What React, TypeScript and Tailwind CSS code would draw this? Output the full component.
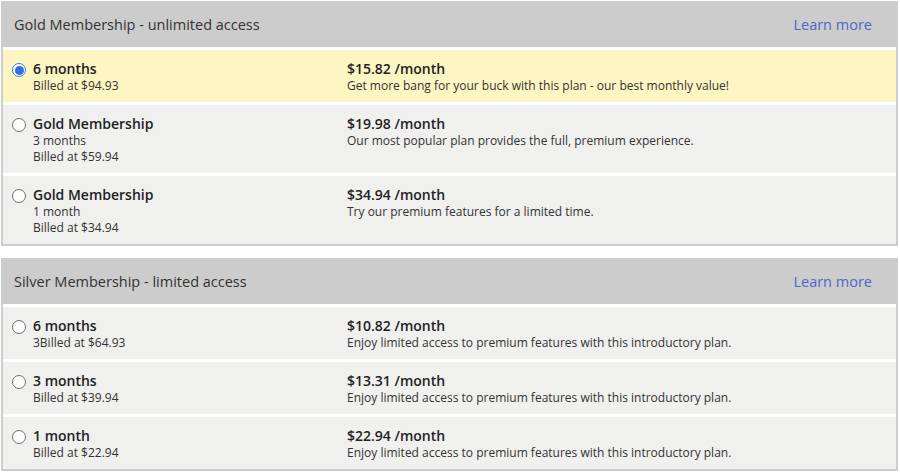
import React from "react";

type Plan = {
  title: string;
  lines: string[];
  price: string;
  desc: string;
  selected?: boolean;
};

const gold: Plan[] = [
  { title: "6 months", lines: ["Billed at $94.93"], price: "$15.82 /month", desc: "Get more bang for your buck with this plan - our best monthly value!", selected: true },
  { title: "Gold Membership", lines: ["3 months", "Billed at $59.94"], price: "$19.98 /month", desc: "Our most popular plan provides the full, premium experience." },
  { title: "Gold Membership", lines: ["1 month", "Billed at $34.94"], price: "$34.94 /month", desc: "Try our premium features for a limited time." },
];

const silver: Plan[] = [
  { title: "6 months", lines: ["3Billed at $64.93"], price: "$10.82 /month", desc: "Enjoy limited access to premium features with this introductory plan." },
  { title: "3 months", lines: ["Billed at $39.94"], price: "$13.31 /month", desc: "Enjoy limited access to premium features with this introductory plan." },
  { title: "1 month", lines: ["Billed at $22.94"], price: "$22.94 /month", desc: "Enjoy limited access to premium features with this introductory plan." },
];

function Radio({ checked }: { checked?: boolean }) {
  return checked ? (
    <span className="mt-[3px] flex h-[14px] w-[14px] shrink-0 items-center justify-center rounded-full border border-[#3a78d8] bg-white">
      <span className="h-[9px] w-[9px] rounded-full bg-[#2f6fe0]" />
    </span>
  ) : (
    <span className="mt-[3px] h-[14px] w-[14px] shrink-0 rounded-full border border-[#6e6e6e] bg-white" />
  );
}

function Row({ p }: { p: Plan }) {
  return (
    <div className={`flex pt-[10px] pb-[8px] pl-[9px] ${p.selected ? "bg-[#fdf5c2]" : "bg-[#f0f0ef]"}`}>
      <div className="flex w-[335px] gap-[7px]">
        <Radio checked={p.selected} />
        <div className="flex flex-col">
          <div className="text-[14px] leading-[18px] font-semibold text-[#222]">{p.title}</div>
          {p.lines.map((l, i) => (
            <div key={i} className="text-[12px] leading-[16px] text-[#333]">{l}</div>
          ))}
        </div>
      </div>
      <div className="flex flex-col">
        <div className="text-[14px] leading-[18px] font-semibold text-[#222]">{p.price}</div>
        <div className="text-[12px] leading-[16px] text-[#333]">{p.desc}</div>
      </div>
    </div>
  );
}

function Panel({ title, plans }: { title: string; plans: Plan[] }) {
  return (
    <div className="flex flex-col gap-[3px] border-2 border-[#cdcdcd] bg-white">
      <div className="flex h-[44px] items-center justify-between bg-[#cccccc] pl-[11px] pr-[24px]">
        <span className="text-[14.5px] text-[#333]">{title}</span>
        <span className="text-[14.5px] text-[#4f67c8]">Learn more</span>
      </div>
      {plans.map((p, i) => (
        <Row key={i} p={p} />
      ))}
    </div>
  );
}

export default function App() {
  return (
    <div className="flex h-[474px] w-[900px] flex-col gap-[12px] bg-white pt-[1px] pl-[1px] pr-[2px]" style={{ fontFamily: '"Open Sans", "Noto Sans", sans-serif' }}>
      <Panel title="Gold Membership - unlimited access" plans={gold} />
      <Panel title="Silver Membership - limited access" plans={silver} />
    </div>
  );
}
